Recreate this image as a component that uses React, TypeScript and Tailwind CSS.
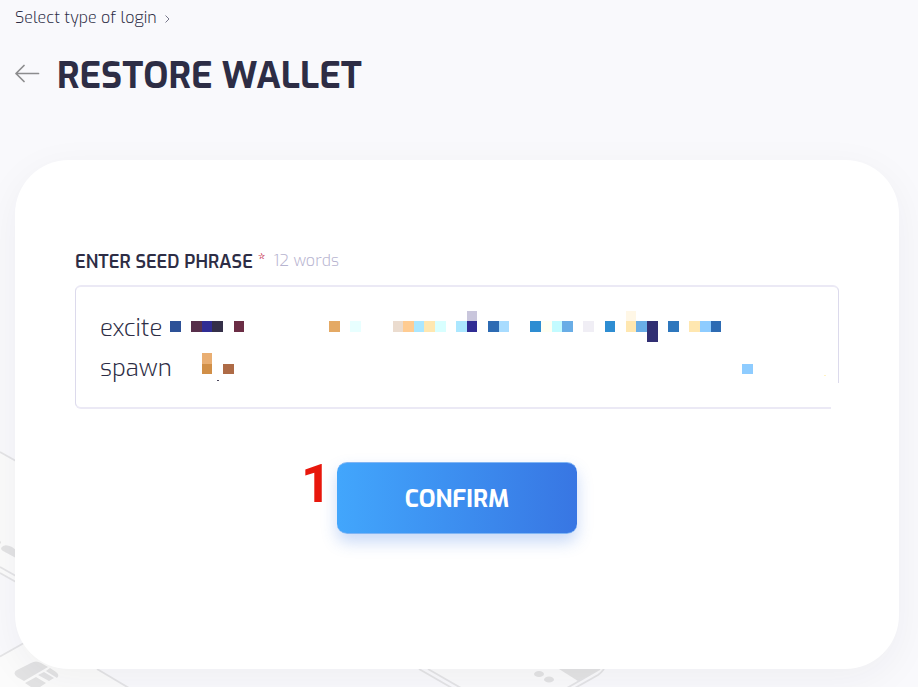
import React from "react";

type Block = { x: number; y: number; w: number; h: number; c: string };

// Redaction mosaic over the phrase, measured from the field's outer corner.
const blocks: Block[] = [
  { x: 95, y: 36, w: 11, h: 11, c: "#2d5197" },
  { x: 116, y: 36, w: 11, h: 11, c: "#572f4b" },
  { x: 127, y: 36, w: 10, h: 11, c: "#302c94" },
  { x: 137, y: 36, w: 11, h: 11, c: "#353049" },
  { x: 159, y: 36, w: 10, h: 11, c: "#6b2d45" },
  { x: 254, y: 36, w: 11, h: 11, c: "#e4a964" },
  { x: 275, y: 36, w: 11, h: 11, c: "#e8ffff" },
  { x: 318, y: 36, w: 10, h: 11, c: "#ebdccf" },
  { x: 328, y: 36, w: 11, h: 11, c: "#ffcc92" },
  { x: 339, y: 36, w: 10, h: 11, c: "#abe7ff" },
  { x: 349, y: 36, w: 11, h: 11, c: "#ffe7b0" },
  { x: 360, y: 36, w: 11, h: 11, c: "#d8ffff" },
  { x: 381, y: 36, w: 11, h: 11, c: "#abe7ff" },
  { x: 392, y: 26, w: 10, h: 10, c: "#c9c6dc" },
  { x: 392, y: 36, w: 10, h: 11, c: "#302c94" },
  { x: 413, y: 36, w: 11, h: 11, c: "#2d6bb3" },
  { x: 424, y: 36, w: 10, h: 11, c: "#a8dcff" },
  { x: 455, y: 36, w: 11, h: 11, c: "#2e8dd2" },
  { x: 466, y: 36, w: 11, h: 11, c: "#fffff3" },
  { x: 477, y: 36, w: 10, h: 11, c: "#c3fbff" },
  { x: 487, y: 36, w: 11, h: 11, c: "#69ade6" },
  { x: 508, y: 36, w: 11, h: 11, c: "#f0eef5" },
  { x: 530, y: 36, w: 10, h: 11, c: "#2e8dd2" },
  { x: 551, y: 26, w: 10, h: 10, c: "#fff7e6" },
  { x: 551, y: 36, w: 10, h: 11, c: "#ffe7b0" },
  { x: 561, y: 36, w: 11, h: 11, c: "#69ade6" },
  { x: 572, y: 36, w: 11, h: 21, c: "#312f73" },
  { x: 593, y: 36, w: 11, h: 11, c: "#2e77bd" },
  { x: 614, y: 36, w: 11, h: 11, c: "#ffe7b0" },
  { x: 625, y: 36, w: 11, h: 11, c: "#8eccff" },
  { x: 636, y: 36, w: 10, h: 11, c: "#2d6bb3" },
  { x: 127, y: 68, w: 10, h: 11, c: "#e9ae72" },
  { x: 127, y: 79, w: 10, h: 10, c: "#d18f47" },
  { x: 148, y: 79, w: 11, h: 10, c: "#ae6b46" },
  { x: 142, y: 95, w: 2, h: 1, c: "#4b475c" },
  { x: 667, y: 79, w: 11, h: 10, c: "#8eccff" },
  { x: 749, y: 90, w: 2, h: 1, c: "#fff3c4" },
];

function Backdrop() {
  return (
    <svg className="absolute inset-0" width="918" height="687" fill="none">
      <path d="M0 453 15 461V582L0 573Z M0 656 26 641 60 669H97L129 687H0Z" fill="#fbfbfb" />
      <path d="M430 669H604L573 687H460Z" fill="#fafafb" />
      <g stroke="#e4e4e6" strokeWidth="1.8">
        <path d="M0 452 16 461M0 567 16 576M0 573 16 582M0 656.500 24 643" />
        <path d="M97 669 129 688M419 669 452 688M428 669 461 688M567 688 600 669M575 688 598 675Q601 673 604 669" />
      </g>
      <g fill="#e3e3e4">
        <path d="M0 541Q2 542 0 544Z M1 548Q4 543 12 547L16 550V558L3 551Q1 550 1 548Z" />
        <path d="M17 670 31 663Q36 660 41 663L48 667 24 681 17 677Q12 673 17 670Z" />
        <path d="M50 668 56 672Q60 675 57 678L46 671Z M44 672 54 678 49 681 38 675Z M36 677 46 683 40 687H31L25 683Z" />
        <ellipse cx="539" cy="674" rx="5" ry="3" />
        <ellipse cx="549" cy="679.500" rx="5" ry="3" />
        <path d="M559 669H600L578 681Z" />
      </g>
    </svg>
  );
}

export default function App() {
  return (
    <main className="relative h-[687px] w-[918px] overflow-hidden bg-[#f9f9fc] px-[15px] font-['Exo','Exo_2','Roboto',sans-serif] text-[#2d2d45]">
      <Backdrop />
      <div className="relative">
        <nav className="flex h-[35px] items-center">
          <span className="w-[142px] whitespace-nowrap text-[16px] font-light tracking-[0.03px]">Select type of login</span>
          <svg className="ml-[7px] mt-0.5" width="8" height="8" fill="none" stroke="#77778a">
            <path d="M1.500.5 5 4 1.500 7.500" />
          </svg>
        </nav>
        <header className="flex h-[78px] items-center">
          <svg width="26" height="20" fill="none" stroke="#8c8c8e" strokeWidth="1.7" strokeLinecap="round" strokeLinejoin="round">
            <path d="M9 1.500 1 9.500l8 8M1 9.500h22.500" />
          </svg>
          <h1 className="ml-4 mt-[3px] whitespace-nowrap text-[36px] font-bold leading-none">RESTORE WALLET</h1>
        </header>
        <section className="mt-[47px] h-[509px] w-[884px] rounded-[54px] bg-white px-[60px] pt-[91px] shadow-[0_10px_40px_rgba(40,40,65,0.05)]">
          <label className="flex h-5 items-center whitespace-nowrap">
            <span className="mt-0.5 w-[182.500px] text-[18px] font-semibold tracking-[0.06px]">ENTER SEED PHRASE</span>
            <span className="w-4 text-[18px] leading-5 text-[#c52b48]">*</span>
            <span className="text-[16px] font-light tracking-[0.1px] text-[#b7b4d0]">12 words</span>
          </label>
          <div className="relative mt-[14px] h-[124px] w-[764px] rounded-[6px] border-x border-y-2 border-x-[#dcdaec] border-y-[#ebe9f5] px-6 pt-[21px] text-[24px] font-light leading-10">
            <p>excite</p>
            <p>spawn</p>
            <span className="absolute -bottom-0.5 -right-0.5 h-[26px] w-[9px] bg-white" />
            {blocks.map((b, i) => (
              <span key={i} className="absolute" style={{ left: b.x - 1, top: b.y - 2, width: b.w, height: b.h, background: b.c }} />
            ))}
          </div>
          <div className="mt-[53px] flex">
            <span className="ml-[226px] w-9 font-['Roboto',sans-serif] text-[53px] font-bold leading-[44px] text-[#e8170c]">1</span>
            <button className="h-[72px] w-[240px] rounded-[10px] border-y border-[#80b5f4] bg-linear-to-r from-[#42a6fc] to-[#3876e3] pt-px text-[24px] font-bold text-white shadow-[0_8px_16px_rgba(56,118,227,0.28)]">
              CONFIRM
            </button>
          </div>
        </section>
      </div>
    </main>
  );
}
